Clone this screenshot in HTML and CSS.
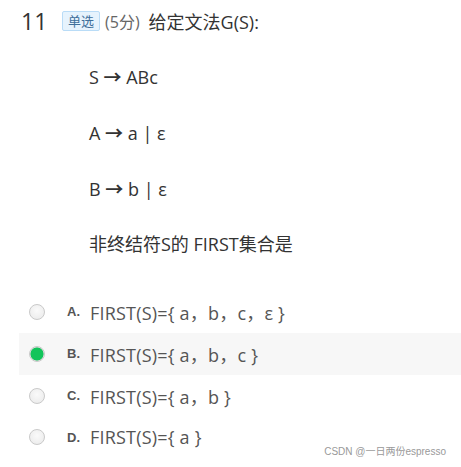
FILE: index.html
```html
<!DOCTYPE html>
<html lang="zh-CN">
<head>
<meta charset="utf-8">
<link rel="stylesheet" href="styles.css">
</head>
<body>
<div class="question">
  <div class="head">
    <span class="num">11</span>
    <span class="tag">单选</span>
    <span class="score">(5分)</span>
    <span class="title">给定文法G(S):</span>
  </div>
  <div class="body">
    <p class="line">S <span class="arrow">→</span> ABc</p>
    <p class="line">A <span class="arrow">→</span> a | ε</p>
    <p class="line">B <span class="arrow">→</span> b | ε</p>
    <p class="line">非终结符S的 FIRST集合是</p>
  </div>
  <ul class="options">
    <li class="opt"><span class="radio"></span><span class="letter">A.</span><span class="text">FIRST(S)={ a，b，c，ε }</span></li>
    <li class="opt selected"><span class="radio"></span><span class="letter">B.</span><span class="text">FIRST(S)={ a，b，c }</span></li>
    <li class="opt"><span class="radio"></span><span class="letter">C.</span><span class="text">FIRST(S)={ a，b }</span></li>
    <li class="opt"><span class="radio"></span><span class="letter">D.</span><span class="text">FIRST(S)={ a }</span></li>
  </ul>
  <div class="mark">CSDN @一日两份espresso</div>
</div>
</body>
</html>
```
FILE: styles.css
```css
html, body {
  margin: 0;
  padding: 0;
  background: #fff;
}
body {
  font-family: "Open Sans", "Noto Sans CJK SC", sans-serif;
  color: #333;
}
.question {
  position: relative;
  width: 461px;
  height: 467px;
  overflow: hidden;
}
.head {
  display: flex;
  align-items: center;
  padding: 8px 0 0 21px;
  height: 26px;
}
.num {
  font-size: 23px;
  width: 41px;
  color: #333;
}
.tag {
  font-size: 13px;
  line-height: 18px;
  padding: 0 5px;
  background: #e6f3fd;
  border: 1px solid #b9dcf7;
  color: #3f6f9a;
  border-radius: 2px;
  font-family: "Noto Sans CJK SC", sans-serif;
}
.score {
  font-size: 16px;
  color: #666;
  margin-left: 5px;
  font-family: "Open Sans", "Noto Sans CJK SC", sans-serif;
}
.title {
  font-size: 18px;
  margin-left: 9px;
  color: #333;
  font-family: "Open Sans", "Noto Sans CJK SC", sans-serif;
}
.body {
  padding: 30px 0 0 89px;
}
.line {
  margin: 0 0 30px;
  font-size: 18px;
  line-height: 25px;
  color: #333;
  font-family: "Open Sans", "Noto Sans CJK SC", sans-serif;
}
.line:last-child {
  margin-bottom: 0;
}
.arrow {
  font-family: "Noto Sans CJK SC", sans-serif;
  font-weight: bold;
}
.options {
  list-style: none;
  margin: 34px 0 0 19px;
  padding: 0;
}
.opt {
  display: flex;
  align-items: center;
  height: 41.5px;
}
.opt.selected {
  background: #f7f7f7;
  height: 42.5px;
}
.radio {
  width: 14px;
  height: 14px;
  border-radius: 50%;
  border: 1px solid #c9c9c9;
  background: radial-gradient(circle at 50% 40%, #fafafa 0%, #e9e9e9 100%);
  margin-left: 10px;
}
.selected .radio {
  background: radial-gradient(circle, #12c45a 0%, #12c45a 62%, #e4e4e4 70%, #ececec 100%);
}
.letter {
  margin-left: 22px;
  width: 23px;
  font-size: 13px;
  font-weight: bold;
  color: #555;
  font-family: "Liberation Sans", sans-serif;
}
.text {
  font-size: 18px;
  color: #555;
  letter-spacing: 0.2px;
  font-family: "Open Sans", "Noto Sans CJK SC", sans-serif;
}
.mark {
  position: absolute;
  right: 15px;
  bottom: 9px;
  font-size: 10px;
  color: #999;
  font-family: "Liberation Sans", "Noto Sans CJK SC", sans-serif;
}
```
